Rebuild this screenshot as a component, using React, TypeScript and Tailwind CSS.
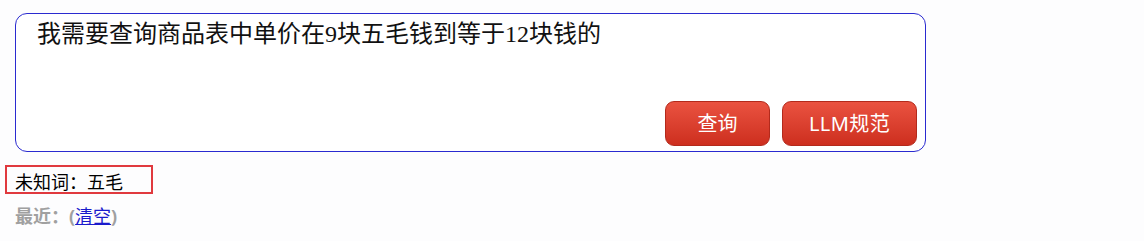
import React from "react";

export default function App() {
  return (
    <div className="w-[1144px] h-[241px] bg-[#fdfdfe] pt-[13px] font-['Noto_Sans','Noto_Sans_CJK_SC',sans-serif]">
      <div className="ml-[15px] w-[911px] h-[139px] border border-[#2a2ad0] rounded-[12px] bg-white flex flex-col justify-between pl-[21px] pr-[8px] pt-[6px] pb-[5px]">
        <div className="text-[24px] leading-[28px] text-[#111] font-['Liberation_Serif','Noto_Sans_CJK_SC',serif]">
          我需要查询商品表中单价在9块五毛钱到等于12块钱的
        </div>
        <div className="flex justify-end gap-[12px]">
          <button className="w-[105px] h-[45px] rounded-[9px] border border-[#b32a1c] bg-gradient-to-b from-[#ea5240] to-[#cd2e1e] text-white text-[20px] leading-none">
            查询
          </button>
          <button className="w-[135px] h-[45px] rounded-[9px] border border-[#b32a1c] bg-gradient-to-b from-[#ea5240] to-[#cd2e1e] text-white text-[20px] leading-none tracking-[0.4px]">
            LLM规范
          </button>
        </div>
      </div>
      <div className="mt-[13px] ml-[5px] w-[148px] h-[29px] border-2 border-[#e0393e] pl-[8px] text-[18px] leading-[30px] text-black overflow-hidden">
        未知词：五毛
      </div>
      <div className="mt-[10px] ml-[15px] text-[18px] leading-[24px] text-[#a0a0a0] font-bold">
        最近：(<a href="#" className="text-[#1a1acc] underline font-normal">清空</a>)
      </div>
    </div>
  );
}
